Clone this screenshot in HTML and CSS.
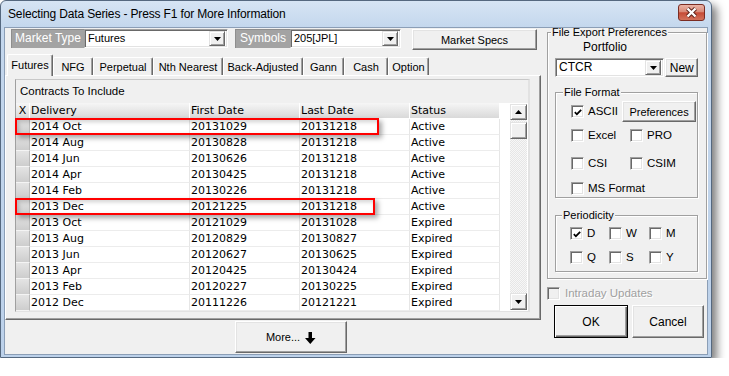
FILE: index.html
```html
<!DOCTYPE html>
<html>
<head>
<meta charset="utf-8">
<title>Selecting Data Series</title>
<link rel="stylesheet" href="styles.css">
</head>
<body>
<div class="window">
  <div class="titlebar">
    <span class="title">Selecting Data Series - Press F1 for More Information</span>
    <button class="close" aria-label="Close"><svg width="25" height="15" viewBox="0 0 25 15"><path d="M8.5 3.5 L16.5 11.5 M16.5 3.5 L8.5 11.5" stroke="#5a2018" stroke-width="4.2"/><path d="M8.5 3.5 L16.5 11.5 M16.5 3.5 L8.5 11.5" stroke="#fff" stroke-width="2.4"/></svg></button>
  </div>
  <div class="client">
    <div class="leftcol">
      <div class="toprow">
        <div class="lbl lbl-mt">Market Type</div>
        <div class="combo combo-mt"><span class="val">Futures</span><span class="dd"><svg width="7" height="4" viewBox="0 0 7 4"><path d="M0 0H7L3.5 4Z" fill="#000"/></svg></span></div>
        <div class="lbl lbl-sym">Symbols</div>
        <div class="combo combo-sym"><span class="val">205[JPL]</span><span class="dd"><svg width="7" height="4" viewBox="0 0 7 4"><path d="M0 0H7L3.5 4Z" fill="#000"/></svg></span></div>
        <button class="btn btn-specs">Market Specs</button>
      </div>
      <div class="tabs">
        <div class="tab active t-fut">Futures</div>
        <div class="tab t-nfg">NFG</div>
        <div class="tab t-perp">Perpetual</div>
        <div class="tab t-nth">Nth Nearest</div>
        <div class="tab t-back">Back-Adjusted</div>
        <div class="tab t-gann">Gann</div>
        <div class="tab t-cash">Cash</div>
        <div class="tab t-opt">Option</div>
      </div>
      <div class="panel">
        <div class="inner">
          <div class="caption">Contracts To Include</div>
          <div class="gridarea">
            <div class="table">
              <div class="row head"><div class="c-x">X</div><div>Delivery</div><div>First Date</div><div>Last Date</div><div>Status</div></div>
              <div class="row"><div class="c-x"></div><div>2014 Oct</div><div>20131029</div><div>20131218</div><div>Active</div></div>
              <div class="row"><div class="c-x"></div><div>2014 Aug</div><div>20130828</div><div>20131218</div><div>Active</div></div>
              <div class="row"><div class="c-x"></div><div>2014 Jun</div><div>20130626</div><div>20131218</div><div>Active</div></div>
              <div class="row"><div class="c-x"></div><div>2014 Apr</div><div>20130425</div><div>20131218</div><div>Active</div></div>
              <div class="row"><div class="c-x"></div><div>2014 Feb</div><div>20130226</div><div>20131218</div><div>Active</div></div>
              <div class="row"><div class="c-x"></div><div>2013 Dec</div><div>20121225</div><div>20131218</div><div>Active</div></div>
              <div class="row"><div class="c-x"></div><div>2013 Oct</div><div>20121029</div><div>20131028</div><div>Expired</div></div>
              <div class="row"><div class="c-x"></div><div>2013 Aug</div><div>20120829</div><div>20130827</div><div>Expired</div></div>
              <div class="row"><div class="c-x"></div><div>2013 Jun</div><div>20120627</div><div>20130625</div><div>Expired</div></div>
              <div class="row"><div class="c-x"></div><div>2013 Apr</div><div>20120425</div><div>20130424</div><div>Expired</div></div>
              <div class="row"><div class="c-x"></div><div>2013 Feb</div><div>20120227</div><div>20130225</div><div>Expired</div></div>
              <div class="row"><div class="c-x"></div><div>2012 Dec</div><div>20111226</div><div>20121221</div><div>Expired</div></div>
            </div>
            <div class="vscroll">
              <div class="sbtn sb-up"><svg width="7" height="4" viewBox="0 0 7 4"><path d="M0 4H7L3.5 0Z" fill="#000"/></svg></div>
              <div class="track"><div class="thumb"></div></div>
              <div class="sbtn sb-down"><svg width="7" height="4" viewBox="0 0 7 4"><path d="M0 0H7L3.5 4Z" fill="#000"/></svg></div>
            </div>
          </div>
          <div class="hl hl1"></div>
          <div class="hl hl2"></div>
        </div>
      </div>
      <div class="morerow">
        <button class="btn more">More... <svg class="arrow" width="11" height="12" viewBox="0 0 11 12"><path d="M3.5 0 H7 V6 H10.5 L5.25 12 L0 6 H3.5 Z" fill="#000"/></svg></button>
      </div>
    </div>
    <div class="rightcol">
      <fieldset class="gb gb-outer">
        <legend>File Export Preferences</legend>
        <div class="portfolio">Portfolio</div>
        <div class="pfrow">
          <div class="combo combo-pf"><span class="val">CTCR</span><span class="dd"><svg width="7" height="4" viewBox="0 0 7 4"><path d="M0 0H7L3.5 4Z" fill="#000"/></svg></span></div>
          <button class="btn btn-new">New</button>
        </div>
        <fieldset class="gb gb-ff">
          <legend>File Format</legend>
          <div class="ffrow r1">
            <label class="chk"><span class="cb"><svg width="11" height="11" viewBox="0 0 11 11"><path d="M2 5 L4.3 7.4 L9 2.6" fill="none" stroke="#000" stroke-width="1.9"/></svg></span>ASCII</label>
            <button class="btn btn-pref">Preferences</button>
          </div>
          <div class="ffrow r2">
            <label class="chk col1"><span class="cb"></span>Excel</label>
            <label class="chk"><span class="cb"></span>PRO</label>
          </div>
          <div class="ffrow r3">
            <label class="chk col1"><span class="cb"></span>CSI</label>
            <label class="chk"><span class="cb"></span>CSIM</label>
          </div>
          <div class="ffrow r4">
            <label class="chk col1"><span class="cb"></span>MS Format</label>
          </div>
        </fieldset>
        <fieldset class="gb gb-per">
          <legend>Periodicity</legend>
          <div class="pergrid">
            <label class="chk"><span class="cb"><svg width="11" height="11" viewBox="0 0 11 11"><path d="M2 5 L4.3 7.4 L9 2.6" fill="none" stroke="#000" stroke-width="1.9"/></svg></span>D</label>
            <label class="chk"><span class="cb"></span>W</label>
            <label class="chk"><span class="cb"></span>M</label>
            <label class="chk"><span class="cb"></span>Q</label>
            <label class="chk"><span class="cb"></span>S</label>
            <label class="chk"><span class="cb"></span>Y</label>
          </div>
        </fieldset>
      </fieldset>
      <label class="chk intraday"><span class="cb disabled"></span>Intraday Updates</label>
      <div class="okrow">
        <button class="btn btn-ok">OK</button>
        <button class="btn btn-cancel">Cancel</button>
      </div>
    </div>
  </div>
</div>
</body>
</html>
```

FILE: styles.css
```css
* { box-sizing: border-box; }
html, body { margin: 0; padding: 0; background: #fff; }
body {
  font-family: "Liberation Sans", Arial, sans-serif;
  font-size: 11px;
  color: #000;
}

.window {
  width: 712px;
  height: 358px;
  border: 1px solid #55687f;
  border-radius: 6px 6px 0 0;
  background: linear-gradient(#d6e4f4, #c4d7ed 26px, #bcd1ea);
  box-shadow: 5px 5px 9px rgba(0, 0, 0, 0.5);
  display: flex;
  flex-direction: column;
}

.titlebar {
  height: 26px;
  display: flex;
  align-items: center;
  padding-left: 7px;
}
.title {
  font-size: 12px;
  letter-spacing: -0.15px;
  color: #000;
}
.close {
  margin-left: auto;
  margin-right: 6px;
  align-self: flex-start;
  margin-top: 3px;
  width: 27px;
  height: 17px;
  padding: 0;
  border: 1px solid #7b2c22;
  border-radius: 3px;
  background: linear-gradient(#eab3a6, #d98a78 45%, #c64b36 52%, #d2735c);
  display: flex;
  align-items: center;
  justify-content: center;
}

.client {
  flex: 1;
  margin: 0 3px 2px 3px;
  border: 1px solid #8b9eb6;
  background: #f0f0f0;
  display: flex;
  gap: 6px;
}

/* ---------- left column ---------- */
.leftcol {
  width: 536px;
  display: flex;
  flex-direction: column;
}
.toprow {
  display: flex;
  align-items: flex-start;
  margin: 1px 0 0 6px;
  height: 21px;
}
.lbl {
  height: 19px;
  background: #a3a3a3;
  color: #fff;
  font-size: 12px;
  text-align: center;
  border-top: 1px solid #8e8e8e;
  border-left: 1px solid #8e8e8e;
  line-height: 17px;
}
.lbl-mt { width: 73px; }
.lbl-sym { width: 55px; margin-left: 7px; }

.combo {
  height: 19px;
  background: #fff;
  border: 1px solid;
  border-color: #a0a0a0 #fff #fff #a0a0a0;
  box-shadow: inset 1px 1px #696969, inset -1px -1px #e3e3e3;
  display: flex;
  align-items: center;
  padding: 2px 2px 2px 3px;
  font-size: 11px;
}
.combo .val { flex: 1; line-height: 15px; }
.combo .dd {
  width: 16px;
  height: 15px;
  background: #f0f0f0;
  border: 1px solid;
  border-color: #e3e3e3 #696969 #696969 #e3e3e3;
  box-shadow: inset 1px 1px #fff, inset -1px -1px #a0a0a0;
  display: flex;
  align-items: center;
  justify-content: center;
}
.combo-mt { width: 144px; }
.combo-sym { width: 111px; }
.combo-pf { font-size: 12px; }

.btn {
  font: inherit;
  color: #000;
  padding: 0;
  background: #f0f0f0;
  border: 1px solid;
  border-color: #fff #696969 #696969 #fff;
  box-shadow: inset -1px -1px #a0a0a0, inset 1px 1px #e3e3e3;
  cursor: default;
}
.btn-specs {
  width: 125px;
  height: 21px;
  margin-left: 11px;
}

.tabs {
  display: flex;
  align-items: flex-end;
  height: 21px;
  margin-top: 4px;
  padding-left: 2px;
}
.tab {
  height: 18px;
  line-height: 18px;
  text-align: center;
  border-top: 1px solid #fff;
  border-left: 1px solid #fff;
  border-right: 1px solid #696969;
  box-shadow: inset -1px 0 #a0a0a0;
  border-radius: 2px 2px 0 0;
  background: #f0f0f0;
}
.tab.active {
  height: 22px;
  line-height: 20px;
  margin-bottom: -1px;
  position: relative;
  z-index: 1;
}
.t-fut { width: 46px; }
.t-nfg { width: 40px; }
.t-perp { width: 60px; }
.t-nth { width: 70px; }
.t-back { width: 80px; }
.t-gann { width: 41px; }
.t-cash { width: 44px; }
.t-opt { width: 41px; }

.panel {
  height: 245px;
  border: 1px solid;
  border-color: #fff #696969 #696969 #fff;
  box-shadow: inset -1px -1px #a0a0a0;
  padding: 3px 0 0 9px;
}
.inner {
  position: relative;
  width: 515px;
  height: 233px;
  border-left: 1px solid #a0a0a0;
  border-top: 1px solid #c8c8c8;
  border-right: 2px solid #e2e2e2;
  border-bottom: 1px solid #e2e2e2;
  display: flex;
  flex-direction: column;
}
.caption {
  height: 23px;
  line-height: 23px;
  padding-left: 4px;
  font-size: 11.5px;
}
.gridarea {
  height: 208px;
  background: #fff;
  display: flex;
}
.table {
  width: 484px;
  font-family: "DejaVu Sans", Verdana, sans-serif;
  font-size: 11px;
}
.row {
  display: grid;
  grid-template-columns: 14px 160px 110px 110px 90px;
  height: 16px;
}
.row > div {
  height: 16px;
  line-height: 16px;
  padding-left: 1px;
  border-right: 1px solid #e6e6e6;
  border-bottom: 1px solid #ececec;
  white-space: nowrap;
  overflow: hidden;
}
.row.head > div {
  background: linear-gradient(#f6f6f6, #d9d9d9);
  border-right: 1px solid #fff;
  border-bottom: 1px solid #fff;
  line-height: 16px;
}
.row.head > .c-x { padding-left: 0; text-align: center; }
.row > .c-x {
  background: linear-gradient(#e4e4e4, #cdcdcd);
  border-right: 1px solid #b8b8b8;
  border-bottom: 1px solid #f4f4f4;
  padding-left: 0;
}

.vscroll {
  width: 17px;
  margin: 1px 1px 1px 10px;
  display: flex;
  flex-direction: column;
}
.sbtn {
  height: 16px;
  background: #f0f0f0;
  border: 1px solid;
  border-color: #e3e3e3 #696969 #696969 #e3e3e3;
  box-shadow: inset 1px 1px #fff, inset -1px -1px #a0a0a0;
  display: flex;
  align-items: center;
  justify-content: center;
}
.sb-down { height: 17px; }
.track {
  flex: 1;
  background-color: #f7f7f7;
  background-image: conic-gradient(#e6e6e6 25%, transparent 0 50%, #e6e6e6 0 75%, transparent 0);
  background-size: 2px 2px;
  padding-top: 2px;
}
.thumb {
  height: 17px;
  background: #f0f0f0;
  border: 1px solid;
  border-color: #e3e3e3 #696969 #696969 #e3e3e3;
  box-shadow: inset 1px 1px #fff, inset -1px -1px #a0a0a0;
}

.hl {
  position: absolute;
  left: -1px;
  height: 17px;
  border: 2px solid #ff0000;
  box-shadow: 3px 3px 5px rgba(0, 0, 0, 0.35), inset 2px 2px 4px rgba(0, 0, 0, 0.18);
}
.hl1 { top: 38px; width: 364px; }
.hl2 { top: 118px; width: 360px; }

.morerow { padding: 1px 0 0 230px; }
.more {
  width: 112px;
  height: 32px;
  display: flex;
  align-items: center;
  justify-content: center;
  gap: 5px;
}
.arrow { margin-top: 1px; }

/* ---------- right column ---------- */
.rightcol {
  width: 160px;
  display: flex;
  flex-direction: column;
}
.gb {
  margin: 0;
  min-width: 0;
  border: 1px solid #a0a0a0;
  box-shadow: inset 1px 1px #fff, 1px 1px #fff;
}
.gb > legend {
  font-size: 11px;
  line-height: 8px;
  padding: 0 1px;
  background: #f0f0f0;
}
.gb-outer {
  width: 160px;
  height: 251px;
  padding: 0 8px 0 7px;
}
.gb-outer > legend { margin-left: -4px; }
.portfolio {
  margin-top: 5px;
  height: 13px;
  line-height: 13px;
  padding-left: 28px;
  font-size: 12px;
}
.pfrow {
  display: flex;
  margin-top: 4px;
  height: 19px;
}
.combo-pf { width: 111px; }
.btn-new {
  width: 33px;
  height: 19px;
  margin-left: 1px;
  font-size: 12px;
}

.gb-ff {
  width: 143px;
  height: 110px;
  margin-top: 11px;
  padding: 5px 0 0 15px;
}
.gb-ff > legend, .gb-per > legend { margin-left: -8px; }
.ffrow { display: flex; align-items: center; }
.ffrow.r1 { height: 21px; }
.ffrow.r2 { height: 13px; margin-top: 7px; }
.ffrow.r3 { height: 13px; margin-top: 15px; }
.ffrow.r4 { height: 13px; margin-top: 12px; }
.col1 { width: 59px; }

.chk {
  display: flex;
  align-items: center;
  gap: 4px;
  height: 13px;
  font-size: 11.5px;
  line-height: 13px;
  white-space: nowrap;
}
.cb {
  width: 13px;
  height: 13px;
  flex: none;
  background: #fff;
  border: 1px solid;
  border-color: #a0a0a0 #fff #fff #a0a0a0;
  box-shadow: inset 1px 1px #696969, inset -1px -1px #e3e3e3;
  display: flex;
  align-items: center;
  justify-content: center;
}
.cb svg { margin: 1px 0 0 1px; }
.cb.disabled { background: #f0f0f0; }
.btn-pref {
  width: 74px;
  height: 21px;
  margin-left: 4px;
}

.gb-per {
  width: 143px;
  height: 61px;
  margin-top: 13px;
  padding: 8px 0 0 14px;
}
.pergrid {
  display: grid;
  grid-template-columns: 39px 40px auto;
  grid-auto-rows: 13px;
  row-gap: 11px;
}

.intraday {
  margin-top: 8px;
  gap: 5px;
  color: #a0a0a0;
  text-shadow: 1px 1px #fff;
}
.okrow {
  display: flex;
  gap: 4px;
  margin: 5px 0 0 7px;
}
.btn-ok {
  width: 74px;
  height: 33px;
  font-size: 12px;
  border-color: #000;
  box-shadow: inset 1px 1px #fff, inset -1px -1px #696969, inset -2px -2px #a0a0a0;
}
.btn-cancel {
  width: 72px;
  height: 33px;
  font-size: 12px;
}
```
